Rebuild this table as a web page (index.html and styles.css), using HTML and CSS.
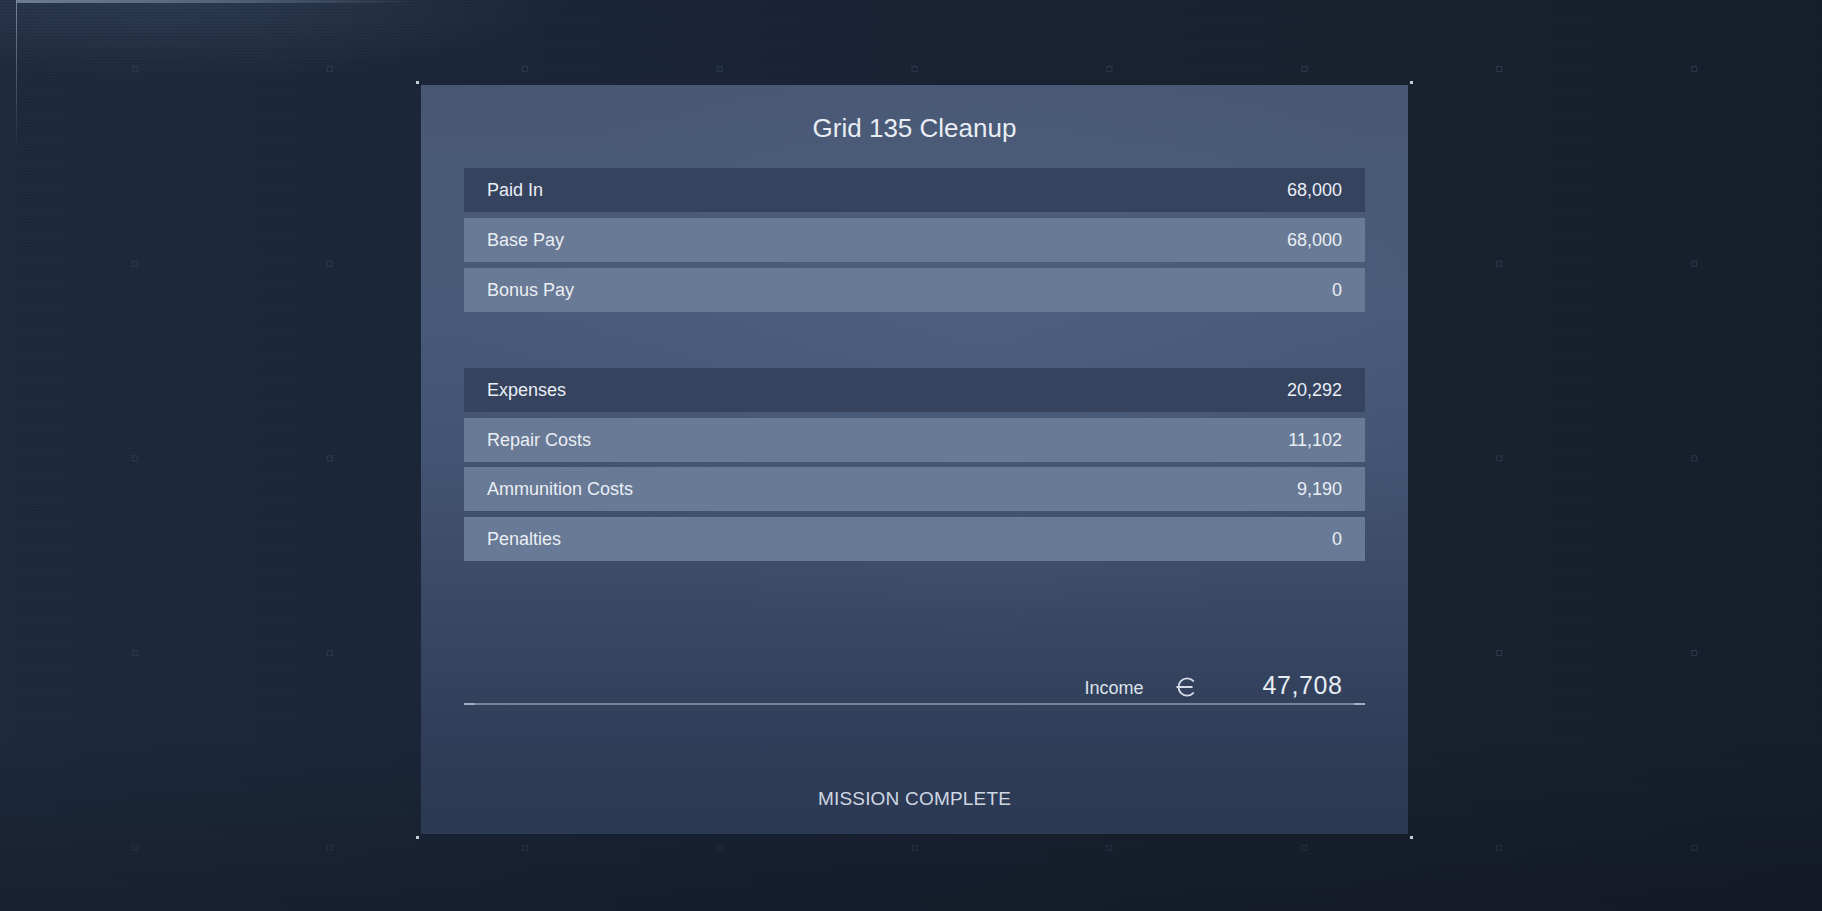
FILE: index.html
```html
<!DOCTYPE html>
<html lang="en">
<head>
<meta charset="utf-8">
<title>Grid 135 Cleanup</title>
<link rel="stylesheet" href="styles.css">
</head>
<body>
<div class="screen">
  <svg class="bg-grid" width="1822" height="911" aria-hidden="true">
    <defs>
      <pattern id="markers" x="132" y="66" width="194.9" height="194.7" patternUnits="userSpaceOnUse">
        <rect x="0.5" y="0.5" width="5" height="5" fill="none" stroke="#2b374d" stroke-width="1"/>
      </pattern>
    </defs>
    <rect x="0" y="0" width="1822" height="911" fill="url(#markers)"/>
  </svg>
  <div class="edge-h"></div>
  <div class="edge-v"></div>

  <section class="panel">
    <span class="corner tl"></span>
    <span class="corner tr"></span>
    <span class="corner bl"></span>
    <span class="corner br"></span>

    <h1 class="title">Grid 135 Cleanup</h1>

    <div class="group">
      <div class="row head"><span>Paid In</span><span class="val">68,000</span></div>
      <div class="row"><span>Base Pay</span><span class="val">68,000</span></div>
      <div class="row"><span>Bonus Pay</span><span class="val">0</span></div>
    </div>

    <div class="group expenses">
      <div class="row head"><span>Expenses</span><span class="val">20,292</span></div>
      <div class="row"><span>Repair Costs</span><span class="val">11,102</span></div>
      <div class="row"><span>Ammunition Costs</span><span class="val">9,190</span></div>
      <div class="row"><span>Penalties</span><span class="val">0</span></div>
    </div>

    <div class="income">
      <span class="income-label">Income</span>
      <svg class="currency" width="20" height="20" viewBox="0 0 20 20" aria-hidden="true">
        <path d="M17.2 3.9 A 8.6 8.6 0 1 0 17.2 16.1" fill="none" stroke="#d6dde8" stroke-width="1.9" stroke-linecap="round"/>
        <path d="M1.2 10 H 15.8" fill="none" stroke="#d6dde8" stroke-width="1.9" stroke-linecap="round"/>
      </svg>
      <span class="income-value">47,708</span>
    </div>

    <div class="status">MISSION COMPLETE</div>
  </section>
</div>
</body>
</html>
```

FILE: styles.css
```css
* {
  box-sizing: border-box;
}

html, body {
  margin: 0;
  padding: 0;
  width: 1822px;
  height: 911px;
  overflow: hidden;
  background: #18202f;
}

.screen {
  position: relative;
  width: 1822px;
  height: 911px;
  padding: 85px 0 0 421px;
  font-family: "Liberation Sans", Arial, sans-serif;
  background:
    repeating-linear-gradient(to bottom, rgba(0, 0, 0, 0.07) 0 1px, rgba(0, 0, 0, 0) 1px 3px),
    radial-gradient(ellipse 400px 80px at 170px 0px, rgba(70, 88, 115, 0.4), rgba(70, 88, 115, 0) 100%),
    linear-gradient(to right, #1e2a3d 0%, #1c283a 20%, #1a2436 45%, #19222f 75%, #171f2d 100%);
}

.screen::after {
  content: "";
  position: absolute;
  left: 0;
  right: 0;
  bottom: 0;
  height: 180px;
  background: linear-gradient(to bottom, rgba(10, 14, 22, 0), rgba(10, 14, 22, 0.3));
  pointer-events: none;
}

.bg-grid {
  position: absolute;
  left: 0;
  top: 0;
  z-index: 0;
}

.edge-h {
  position: absolute;
  left: 16px;
  top: 0;
  width: 400px;
  height: 3px;
  background: linear-gradient(to right, rgba(120, 137, 160, 0.85), rgba(120, 137, 160, 0.5) 55%, rgba(120, 137, 160, 0));
}

.edge-v {
  position: absolute;
  left: 16px;
  top: 0;
  width: 1px;
  height: 150px;
  background: linear-gradient(to bottom, rgba(125, 140, 162, 0.9), rgba(125, 140, 162, 0.4) 60%, rgba(125, 140, 162, 0));
}

.panel {
  position: relative;
  z-index: 1;
  width: 987px;
  height: 749px;
  padding: 27px 43px 0 43px;
  display: flex;
  flex-direction: column;
  background:
    radial-gradient(ellipse 520px 300px at 560px 250px, rgba(95, 115, 150, 0.22), rgba(95, 115, 150, 0)),
    linear-gradient(to bottom, #485874 0%, #495a78 30%, #435472 50%, #3a4966 68%, #2f3d58 88%, #2c3953 100%);
}

.corner {
  position: absolute;
  width: 3px;
  height: 3px;
  background: #c4ccd8;
}

.corner.tl { left: -5px; top: -4px; }
.corner.tr { right: -5px; top: -4px; }
.corner.bl { left: -5px; bottom: -5px; }
.corner.br { right: -5px; bottom: -5px; }

.title {
  margin: 0 0 24px 0;
  height: 32px;
  font-size: 26px;
  line-height: 32px;
  font-weight: normal;
  text-align: center;
  color: #e8edf4;
}

.group {
  display: flex;
  flex-direction: column;
  gap: 6px;
}

.group.expenses {
  margin-top: 56px;
  gap: 5.5px;
}

.row {
  height: 44px;
  padding: 0 23px;
  display: flex;
  align-items: center;
  justify-content: space-between;
  background: #687a95;
  color: #eaeef4;
  font-size: 18px;
  line-height: 22px;
}

.row.head {
  background: #35435f;
}

.income {
  margin-top: 109px;
  padding: 0 23px 0 0;
  display: flex;
  align-items: baseline;
  justify-content: flex-end;
  border-bottom: 2px solid #75839b;
  position: relative;
}

.income::before,
.income::after {
  content: "";
  position: absolute;
  bottom: -2px;
  height: 2px;
  width: 11px;
  background: #a3aec0;
}

.income::before { left: 0; }
.income::after { right: 0; }

.income-label {
  font-size: 18px;
  line-height: 30px;
  color: #dce2ea;
}

.currency {
  margin-left: 32px;
  align-self: center;
  position: relative;
  top: 1px;
}

.income-value {
  min-width: 147px;
  text-align: right;
  font-size: 25px;
  line-height: 30px;
  letter-spacing: 0.6px;
  margin-right: -0.6px;
  color: #e8edf4;
}

.status {
  margin-top: 82px;
  font-size: 19px;
  line-height: 24px;
  letter-spacing: 0.2px;
  text-align: center;
  color: #cfd7e2;
}
```
